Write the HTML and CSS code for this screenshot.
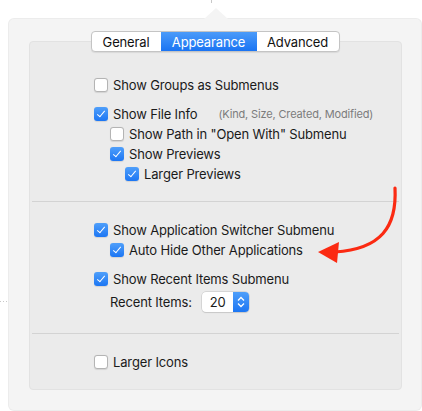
FILE: index.html
```html
<!DOCTYPE html>
<html lang="en">
<head>
    <meta charset="UTF-8">
    <title>Preferences - Appearance</title>
    <link rel="stylesheet" href="styles.css">
</head>
<body>
    <div class="tick-top"></div>
    <div class="tick-left"></div>
    <div class="popover">
        <div class="notch"></div>
        <div class="tabs">
            <span class="tab tab-general">General</span>
            <span class="tab tab-appearance active">Appearance</span>
            <span class="tab tab-advanced">Advanced</span>
        </div>
        <div class="panel">
            <section class="group group-first">
                <label class="row"><span class="box"></span>Show Groups as Submenus</label>
                <label class="row row-gap"><span class="box checked"></span>Show File Info<span class="hint">(Kind, Size, Created, Modified)</span></label>
                <label class="row lvl1"><span class="box"></span>Show Path in "Open With" Submenu</label>
                <label class="row lvl1"><span class="box checked"></span>Show Previews</label>
                <label class="row lvl2"><span class="box checked"></span>Larger Previews</label>
            </section>
            <section class="group group-mid">
                <label class="row"><span class="box checked"></span>Show Application Switcher Submenu</label>
                <label class="row lvl1"><span class="box checked"></span>Auto Hide Other Applications</label>
                <label class="row row-gap"><span class="box checked"></span>Show Recent Items Submenu</label>
                <div class="row lvl1 recent">
                    <span class="recent-label">Recent Items:</span>
                    <span class="popup">
                        <span class="popup-value">20</span>
                        <span class="popup-arrows">
                            <svg width="8" height="12" viewBox="0 0 8 12"><path d="M1 4.5 L4 1.5 L7 4.5 M1 7.5 L4 10.5 L7 7.5" fill="none" stroke="#fff" stroke-width="1.3"/></svg>
                        </span>
                    </span>
                </div>
            </section>
            <section class="group group-last">
                <label class="row"><span class="box"></span>Larger Icons</label>
            </section>
        </div>
        <!-- annotation arrow drawn over the panel -->
        <svg class="annotation" width="100" height="90" viewBox="0 0 100 90">
            <path d="M86 1 C 88 40, 72 62, 26 65" fill="none" stroke="#fb2a12" stroke-width="3.2" stroke-linecap="round"/>
            <path d="M9 65 L30 55 L28 76 Z" fill="#fb2a12"/>
        </svg>
    </div>
</body>
</html>
```

FILE: styles.css
```css
body {
    margin: 0;
    padding: 0;
    background-color: white;
    font-family: Inter, 'Liberation Sans', Arial, sans-serif;
    font-size: 13px;
    letter-spacing: -0.15px;
    color: #1a1a1a;
    width: 422px;
    height: 411px;
    position: relative;
    overflow: hidden;
}
.tick-top {
    position: absolute;
    left: 211px;
    top: 0;
    width: 1px;
    height: 3px;
    background-color: #c8c8c8;
}
.tick-left {
    position: absolute;
    left: 0;
    top: 301px;
    width: 8px;
    height: 1px;
    background-image: linear-gradient(to right, #c8c8c8 50%, transparent 50%);
    background-size: 3px 1px;
}
.popover {
    position: relative;
    margin: 19px 1px 1px 9px;
    height: 391px;
    background-color: #f4f4f4;
    border-radius: 5px;
    box-shadow: 0 0 0 1px #ececec;
    display: flex;
    flex-direction: column;
    align-items: center;
}
.notch {
    position: absolute;
    top: -11px;
    left: 195px;
    width: 0;
    height: 0;
    border-left: 12px solid transparent;
    border-right: 12px solid transparent;
    border-bottom: 11px solid #f4f4f4;
}
.tabs {
    display: flex;
    margin-top: 12px;
    margin-bottom: -11px;
    height: 19px;
    border: 1px solid #c4c4c4;
    border-radius: 4px;
    background-color: white;
    box-shadow: 0 1px 1px rgba(0, 0, 0, 0.08);
    overflow: hidden;
    position: relative;
    z-index: 1;
}
.tab {
    display: flex;
    align-items: center;
    justify-content: center;
    font-size: 13px;
    color: #111;
}
.tab-general {
    width: 69px;
}
.tab-appearance {
    width: 96px;
}
.tab-advanced {
    width: 82px;
}
.tab.active {
    background: linear-gradient(#4b9bf9, #1a74f3);
    color: white;
}
.panel {
    align-self: stretch;
    margin: 0 19px 20px 20px;
    flex: 1;
    background-color: #ebebeb;
    border: 1px solid #e2e2e2;
    border-radius: 4px;
    padding: 0 2px;
    display: flex;
    flex-direction: column;
}
.group {
    display: flex;
    flex-direction: column;
    padding-left: 62px;
}
.group-first {
    padding-top: 33px;
    padding-bottom: 18px;
    border-bottom: 1px solid #d3d3d3;
}
.group-mid {
    padding-top: 18px;
    padding-bottom: 21px;
    border-bottom: 1px solid #d3d3d3;
}
.group-last {
    padding-top: 18px;
}
.row {
    display: flex;
    align-items: center;
    height: 20px;
    white-space: nowrap;
}
.row-gap {
    margin-top: 9px;
}
.lvl1 {
    margin-left: 16px;
}
.lvl2 {
    margin-left: 31px;
    height: 19px;
}
.box {
    flex: none;
    width: 12px;
    height: 12px;
    margin-right: 5px;
    border: 1px solid #b4b4b4;
    border-radius: 3px;
    background-color: white;
    box-shadow: 0 0.5px 1px rgba(0, 0, 0, 0.1);
    position: relative;
}
.box.checked {
    width: 14px;
    height: 14px;
    border: none;
    background: linear-gradient(#4f9ffa, #1c76f3);
}
.box.checked::after {
    content: "";
    position: absolute;
    left: 5px;
    top: 2px;
    width: 3px;
    height: 7px;
    border-right: 1.6px solid white;
    border-bottom: 1.6px solid white;
    transform: rotate(40deg);
}
.hint {
    font-size: 11px;
    color: #7c7c7c;
    margin-left: 21px;
}
.recent {
    margin-top: 3px;
}
.recent-label {
    margin-right: 10px;
}
.popup {
    display: flex;
    height: 20px;
    width: 47px;
    border-radius: 4px;
    background-color: white;
    box-shadow: 0 0 0 0.5px #c2c2c2, 0 1px 1px rgba(0, 0, 0, 0.12);
    overflow: hidden;
}
.popup-value {
    flex: 1;
    display: flex;
    align-items: center;
    padding-left: 8px;
    font-size: 13px;
}
.popup-arrows {
    width: 16px;
    display: flex;
    align-items: center;
    justify-content: center;
    background: linear-gradient(#4f9ffa, #1c76f3);
}
.annotation {
    position: absolute;
    left: 300px;
    top: 168px;
    overflow: visible;
}
```
